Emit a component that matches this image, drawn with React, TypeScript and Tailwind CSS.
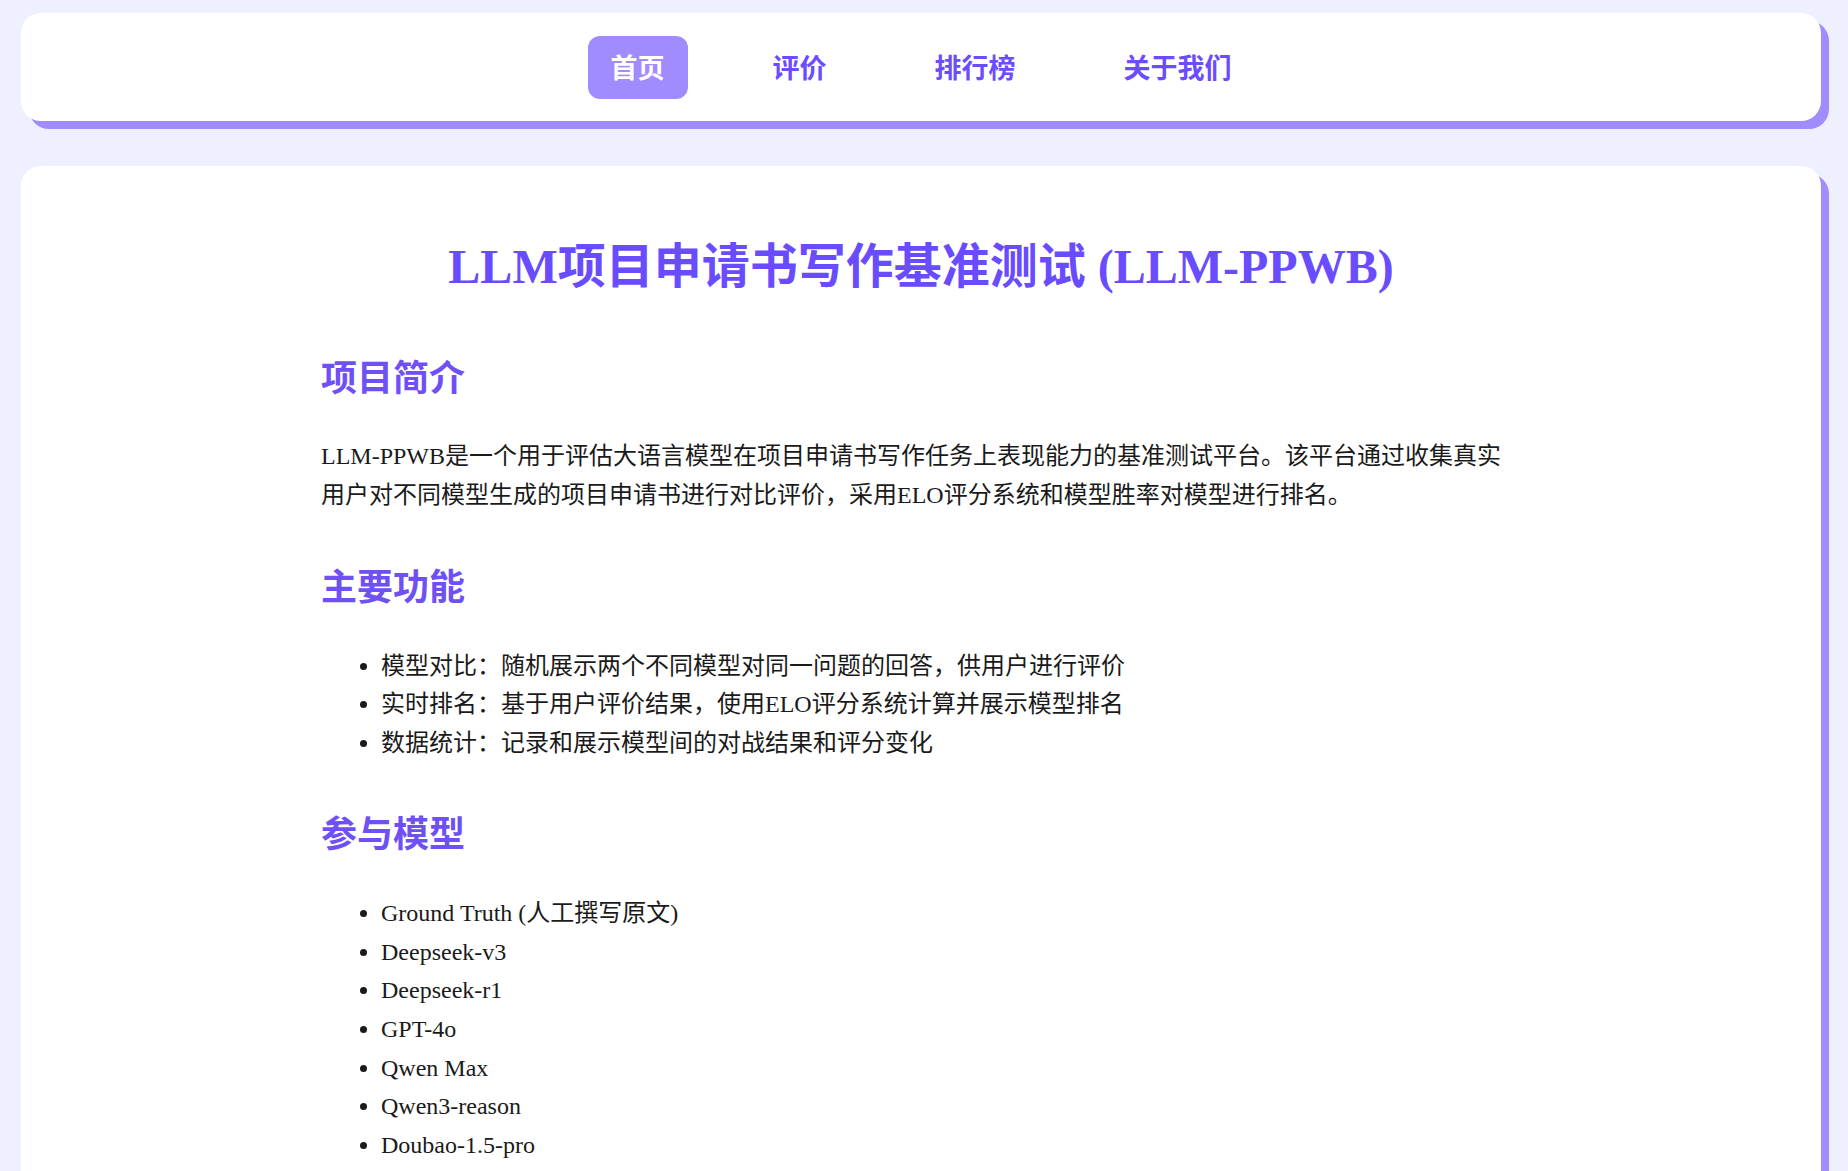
import React from "react";

const FONT = '"Liberation Serif", "Noto Sans CJK SC", serif';

const navItems = [
  { label: "首页", active: true },
  { label: "评价", active: false },
  { label: "排行榜", active: false },
  { label: "关于我们", active: false },
];

const features = [
  "模型对比：随机展示两个不同模型对同一问题的回答，供用户进行评价",
  "实时排名：基于用户评价结果，使用ELO评分系统计算并展示模型排名",
  "数据统计：记录和展示模型间的对战结果和评分变化",
];

const models = [
  "Ground Truth (人工撰写原文)",
  "Deepseek-v3",
  "Deepseek-r1",
  "GPT-4o",
  "Qwen Max",
  "Qwen3-reason",
  "Doubao-1.5-pro",
];

export default function App() {
  return (
    <div
      className="min-h-screen bg-[#eff0ff] pt-[13px] pb-[40px]"
      style={{ fontFamily: FONT }}
    >
      <nav className="ml-[21px] w-[1800px] h-[108px] bg-white rounded-[20px] shadow-[8px_8px_0_#a08bff] flex items-center justify-center gap-[62px]">
        {navItems.map((item) => (
          <a
            key={item.label}
            href="#"
            className={
              item.active
                ? "h-[63px] px-[23px] pt-[5px] flex items-center rounded-[12px] bg-[#a28bfe] text-white text-[27px] font-bold"
                : "h-[63px] px-[23px] pt-[5px] flex items-center rounded-[12px] text-[#6c4cff] text-[27px] font-bold"
            }
          >
            {item.label}
          </a>
        ))}
      </nav>

      <main className="ml-[21px] mt-[45px] w-[1800px] bg-white rounded-[20px] shadow-[8px_8px_0_#a08bff] pt-[72px] pb-[60px]">
        <div className="w-[1200px] mx-auto">
          <h1 className="text-center text-[48px] leading-[58px] font-bold text-[#6a4cff] mb-[57px]">
            LLM项目申请书写作基准测试 (LLM-PPWB)
          </h1>

          <h2 className="pt-[2px] text-[36px] leading-[48px] font-bold text-[#6e50f5] mb-[34px]">
            项目简介
          </h2>
          <p className="text-[24px] leading-[39px] text-[#1a1a1a] mb-[47px]">
            LLM-PPWB是一个用于评估大语言模型在项目申请书写作任务上表现能力的基准测试平台。该平台通过收集真实用户对不同模型生成的项目申请书进行对比评价，采用ELO评分系统和模型胜率对模型进行排名。
          </p>

          <h2 className="pt-[2px] text-[36px] leading-[48px] font-bold text-[#6e50f5] mb-[35px]">
            主要功能
          </h2>
          <ul className="list-disc pl-[60px] text-[24px] leading-[38.4px] text-[#1a1a1a] mb-[47px]">
            {features.map((f) => (
              <li key={f}>{f}</li>
            ))}
          </ul>

          <h2 className="pt-[2px] text-[36px] leading-[48px] font-bold text-[#6e50f5] mb-[35px]">
            参与模型
          </h2>
          <ul className="list-disc pl-[60px] text-[24px] leading-[38.6px] text-[#1a1a1a]">
            {models.map((m) => (
              <li key={m}>{m}</li>
            ))}
          </ul>
        </div>
      </main>
    </div>
  );
}
